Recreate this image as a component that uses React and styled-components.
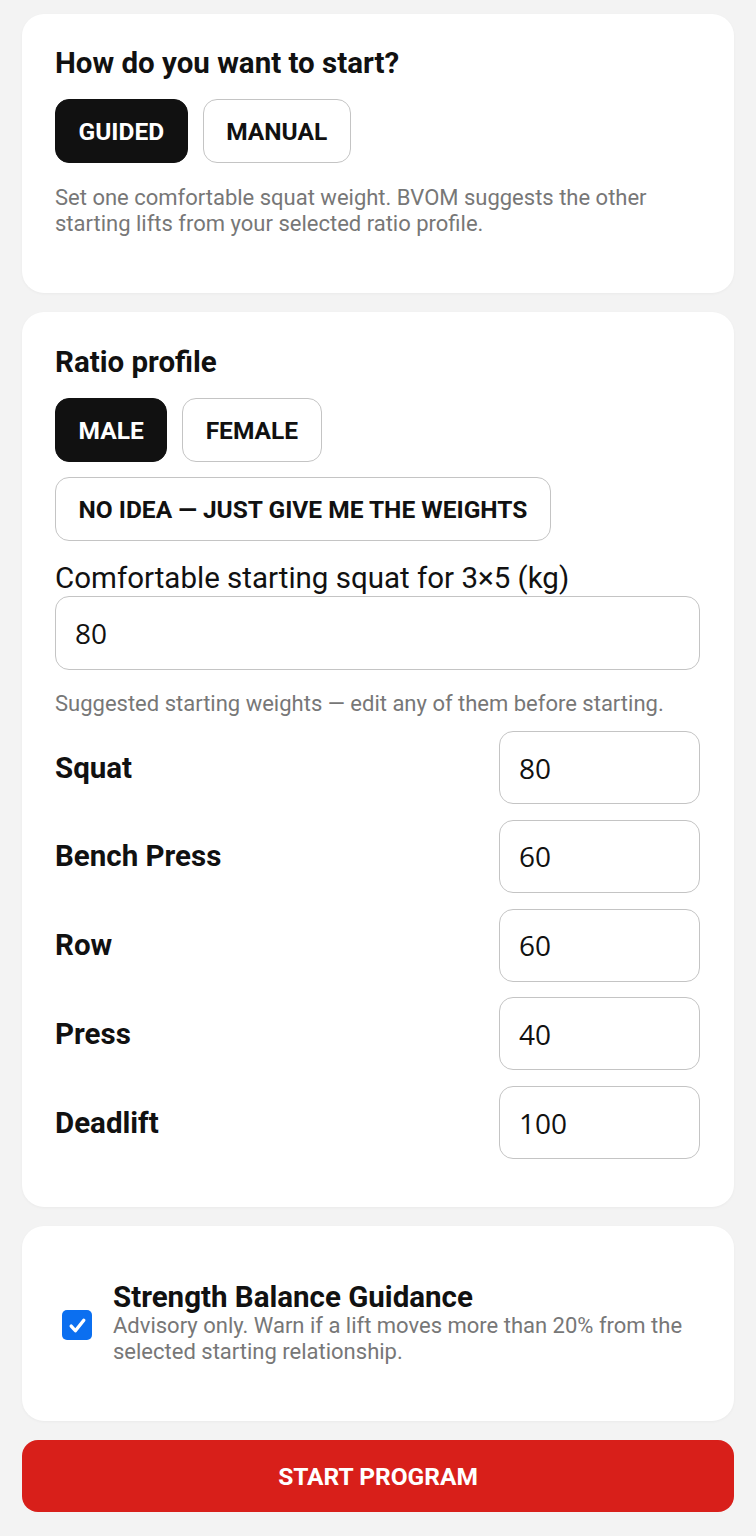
import React, { useState } from "react";
import styled, { createGlobalStyle } from "styled-components";

const GlobalStyle = createGlobalStyle`
    * { box-sizing: border-box; }
    body {
        margin: 0;
        background: #f3f3f3;
        font-family: Roboto, "Liberation Sans", sans-serif;
        color: #111;
    }
`

const Page = styled.main`
    display: flex;
    flex-direction: column;
    gap: 19px;
    padding: 14px 22px 24px;
`

const Card = styled.section`
    background: #fff;
    border-radius: 22px;
    padding: ${props => props.$pad || "34px 34px 48px 33px"};
    box-shadow: 0 1px 3px rgba(0, 0, 0, 0.04);
`

const Heading = styled.h2`
    margin: 0 0 20px;
    font-size: 29.5px;
    line-height: 32px;
    font-weight: 700;
`

const ButtonRow = styled.div`
    display: flex;
    flex-wrap: wrap;
    gap: 15px;
`

const Choice = styled.button`
    height: 64px;
    padding: 0 22.5px;
    border-radius: 14px;
    border: 1px solid ${props => props.$active ? "#111" : "#c4c4c4"};
    background: ${props => props.$active ? "#111" : "#fff"};
    color: ${props => props.$active ? "#fff" : "#111"};
    font-family: Roboto, "Liberation Sans", sans-serif;
    font-size: 24.5px;
    font-weight: 700;
    cursor: pointer;
`

const Hint = styled.p`
    margin: ${props => props.$margin || "22px 0 0"};
    font-size: 22px;
    line-height: 26px;
    color: #777;
`

const Label = styled.label`
    display: block;
    margin: 21px 0 2px;
    font-size: 29.5px;
    line-height: 32px;
`

const TextInput = styled.input`
    display: block;
    width: 100%;
    height: ${props => props.$height || "74px"};
    padding: 0 19px;
    border: 1px solid #c4c4c4;
    border-radius: 14px;
    font-family: "Open Sans", "Noto Sans", sans-serif;
    font-size: 28px;
    color: #111;
    background: #fff;
    outline: none;
`

const LiftList = styled.div`
    display: flex;
    flex-direction: column;
    gap: 15.75px;
    margin-top: 14px;
`

const LiftRow = styled.div`
    display: flex;
    align-items: center;
    justify-content: space-between;
`

const LiftName = styled.span`
    font-size: 29.5px;
    font-weight: 700;
`

const LiftInput = styled(TextInput)`
    width: 201px;
    height: 73px;
`

const CheckRow = styled.label`
    display: flex;
    align-items: center;
    gap: 21px;
    padding-left: 7px;
    cursor: pointer;
`

const Box = styled.span`
    flex: none;
    width: 30px;
    height: 30px;
    margin-top: 4px;
    border-radius: 5px;
    background: ${props => props.$on ? "#0b6ff0" : "#fff"};
    border: ${props => props.$on ? "none" : "2px solid #777"};
    display: flex;
    align-items: center;
    justify-content: center;
`

const CheckText = styled.div`
    display: flex;
    flex-direction: column;
`

const CheckTitle = styled.span`
    font-size: 29.5px;
    line-height: 32px;
    font-weight: 700;
`

const Primary = styled.button`
    height: 72px;
    border: none;
    border-radius: 16px;
    background: #d81f1a;
    color: #fff;
    font-family: Roboto, "Liberation Sans", sans-serif;
    font-size: 24.5px;
    font-weight: 700;
    cursor: pointer;
`

const lifts = [
    ["Squat", "80"],
    ["Bench Press", "60"],
    ["Row", "60"],
    ["Press", "40"],
    ["Deadlift", "100"],
]

export default function App() {
    const [mode, setMode] = useState("guided")
    const [profile, setProfile] = useState("male")
    const [guide, setGuide] = useState(true)

    return (
        <>
            <GlobalStyle />
            <Page>
                <Card $pad="33px 34px 56px 33px">
                    <Heading>How do you want to start?</Heading>
                    <ButtonRow>
                        <Choice $active={mode === "guided"} onClick={() => setMode("guided")}>GUIDED</Choice>
                        <Choice $active={mode === "manual"} onClick={() => setMode("manual")}>MANUAL</Choice>
                    </ButtonRow>
                    <Hint>Set one comfortable squat weight. BVOM suggests the other starting lifts from your selected ratio profile.</Hint>
                </Card>

                <Card>
                    <Heading>Ratio profile</Heading>
                    <ButtonRow>
                        <Choice $active={profile === "male"} onClick={() => setProfile("male")}>MALE</Choice>
                        <Choice $active={profile === "female"} onClick={() => setProfile("female")}>FEMALE</Choice>
                        <Choice $active={profile === "none"} onClick={() => setProfile("none")}>NO IDEA — JUST GIVE ME THE WEIGHTS</Choice>
                    </ButtonRow>
                    <Label>Comfortable starting squat for 3×5 (kg)</Label>
                    <TextInput defaultValue="80" />
                    <Hint $margin="21px 0 0">Suggested starting weights — edit any of them before starting.</Hint>
                    <LiftList>
                        {lifts.map(([name, value]) => (
                            <LiftRow key={name}>
                                <LiftName>{name}</LiftName>
                                <LiftInput defaultValue={value} />
                            </LiftRow>
                        ))}
                    </LiftList>
                </Card>

                <Card $pad="55px 34px 56px 33px">
                    <CheckRow onClick={() => setGuide(!guide)}>
                        <Box $on={guide}>
                            {guide && (
                                <svg width="21" height="21" viewBox="0 0 20 20">
                                    <path d="M4 10.5l4 4.5 8-10" fill="none" stroke="#fff" strokeWidth="3.2" strokeLinecap="round" strokeLinejoin="round" />
                                </svg>
                            )}
                        </Box>
                        <CheckText>
                            <CheckTitle>Strength Balance Guidance</CheckTitle>
                            <Hint $margin="0">Advisory only. Warn if a lift moves more than 20% from the selected starting relationship.</Hint>
                        </CheckText>
                    </CheckRow>
                </Card>

                <Primary>START PROGRAM</Primary>
            </Page>
        </>
    )
}
